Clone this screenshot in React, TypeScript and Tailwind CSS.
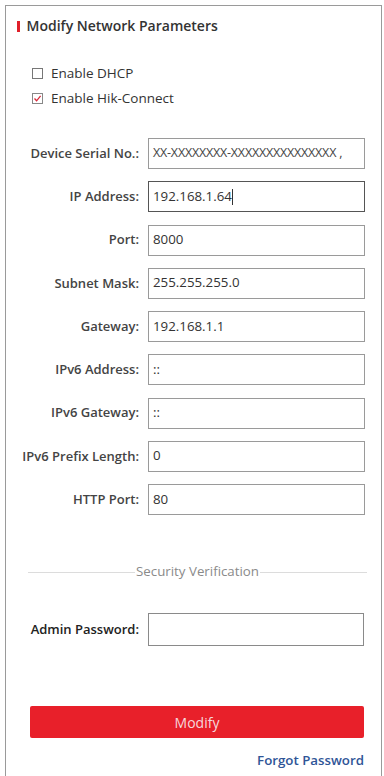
import React from "react";

const fields: { label: string; value: string; focused?: boolean; small?: boolean }[] = [
  { label: "Device Serial No.:", value: "XX-XXXXXXXX-XXXXXXXXXXXXXXX ,", small: true },
  { label: "IP Address:", value: "192.168.1.64", focused: true },
  { label: "Port:", value: "8000" },
  { label: "Subnet Mask:", value: "255.255.255.0" },
  { label: "Gateway:", value: "192.168.1.1" },
  { label: "IPv6 Address:", value: "::" },
  { label: "IPv6 Gateway:", value: "::" },
  { label: "IPv6 Prefix Length:", value: "0" },
  { label: "HTTP Port:", value: "80" },
];

export default function App() {
  return (
    <div
      className="w-[384px] h-[776px] bg-white pt-[5px] pl-[5px]"
      style={{ fontFamily: '"Open Sans", "Noto Sans", sans-serif' }}
    >
      <div className="w-[377px] h-[772px] border-[1.5px] border-[#9a9a9a] flex flex-col">
        {/* Title */}
        <div className="mt-[12px] ml-[11px] flex items-center h-[16px]">
          <div className="w-[2.5px] h-[11px] bg-[#e0202a]" />
          <div className="ml-[7px] text-[14px] leading-[16px] font-semibold text-[#333]">
            Modify Network Parameters
          </div>
        </div>

        {/* Checkboxes */}
        <div className="mt-[30px] ml-[26px] flex flex-col gap-[7px]">
          <div className="flex items-center h-[18px]">
            <div className="w-[11px] h-[11px] border border-[#777] bg-white" />
            <span className="ml-[8px] text-[13.5px] text-[#333]">Enable DHCP</span>
          </div>
          <div className="flex items-center h-[18px]">
            <div className="w-[11px] h-[11px] border border-[#888] bg-white flex items-center justify-center">
              <svg width="9" height="9" viewBox="0 0 9 9">
                <path d="M1.5 4.5 L3.6 6.8 L7.6 1.8" stroke="#d8283a" strokeWidth="1.3" fill="none" />
              </svg>
            </div>
            <span className="ml-[8px] text-[13.5px] text-[#333]">Enable Hik-Connect</span>
          </div>
        </div>

        {/* Fields */}
        <div className="mt-[31px] flex flex-col gap-[12.25px]">
          {fields.map((f) => (
            <div key={f.label} className="flex items-center">
              <div className="w-[133px] text-right text-[13px] font-semibold text-[#444] whitespace-nowrap">
                {f.label}
              </div>
              <div
                className={`ml-[9px] w-[217px] h-[31px] border bg-white flex items-center pl-[4px] overflow-hidden whitespace-nowrap ${
                  f.focused ? "border-[#555] border-[1.5px]" : "border-[#9a9a9a]"
                }`}
              >
                <span className={f.small ? "text-[12.5px] tracking-[-0.2px] text-[#444]" : "text-[13.3px] text-[#333]"}>
                  {f.value}
                </span>
                {f.focused && <span className="w-px h-[16px] bg-[#333]" />}
              </div>
            </div>
          ))}
        </div>

        {/* Security Verification */}
        <div className="mt-[49px] ml-[22px] mr-[14px] flex items-center h-[16px]">
          <div className="flex-1 h-px bg-[#dcdcdc]" />
          <span className="px-[1px] text-[13.3px] text-[#8a8a8a]">Security Verification</span>
          <div className="flex-1 h-px bg-[#dcdcdc]" />
        </div>

        {/* Admin password */}
        <div className="mt-[33px] flex items-center">
          <div className="w-[133px] text-right text-[13px] font-semibold text-[#222] whitespace-nowrap">
            Admin Password:
          </div>
          <div className="ml-[9px] w-[216px] h-[33px] border border-[#8a8a8a] bg-white" />
        </div>

        {/* Modify button */}
        <div className="mt-[60px] ml-[24px] w-[334px] h-[32px] bg-[#e8202a] rounded-[2px] flex items-center justify-center">
          <span className="text-[14px] text-[#f6d8dc]">Modify</span>
        </div>

        {/* Forgot password */}
        <div className="mt-[14px] mr-[17px] flex justify-end">
          <span className="text-[13.3px] leading-[16px] font-semibold text-[#2f5597]">Forgot Password</span>
        </div>
      </div>
    </div>
  );
}
